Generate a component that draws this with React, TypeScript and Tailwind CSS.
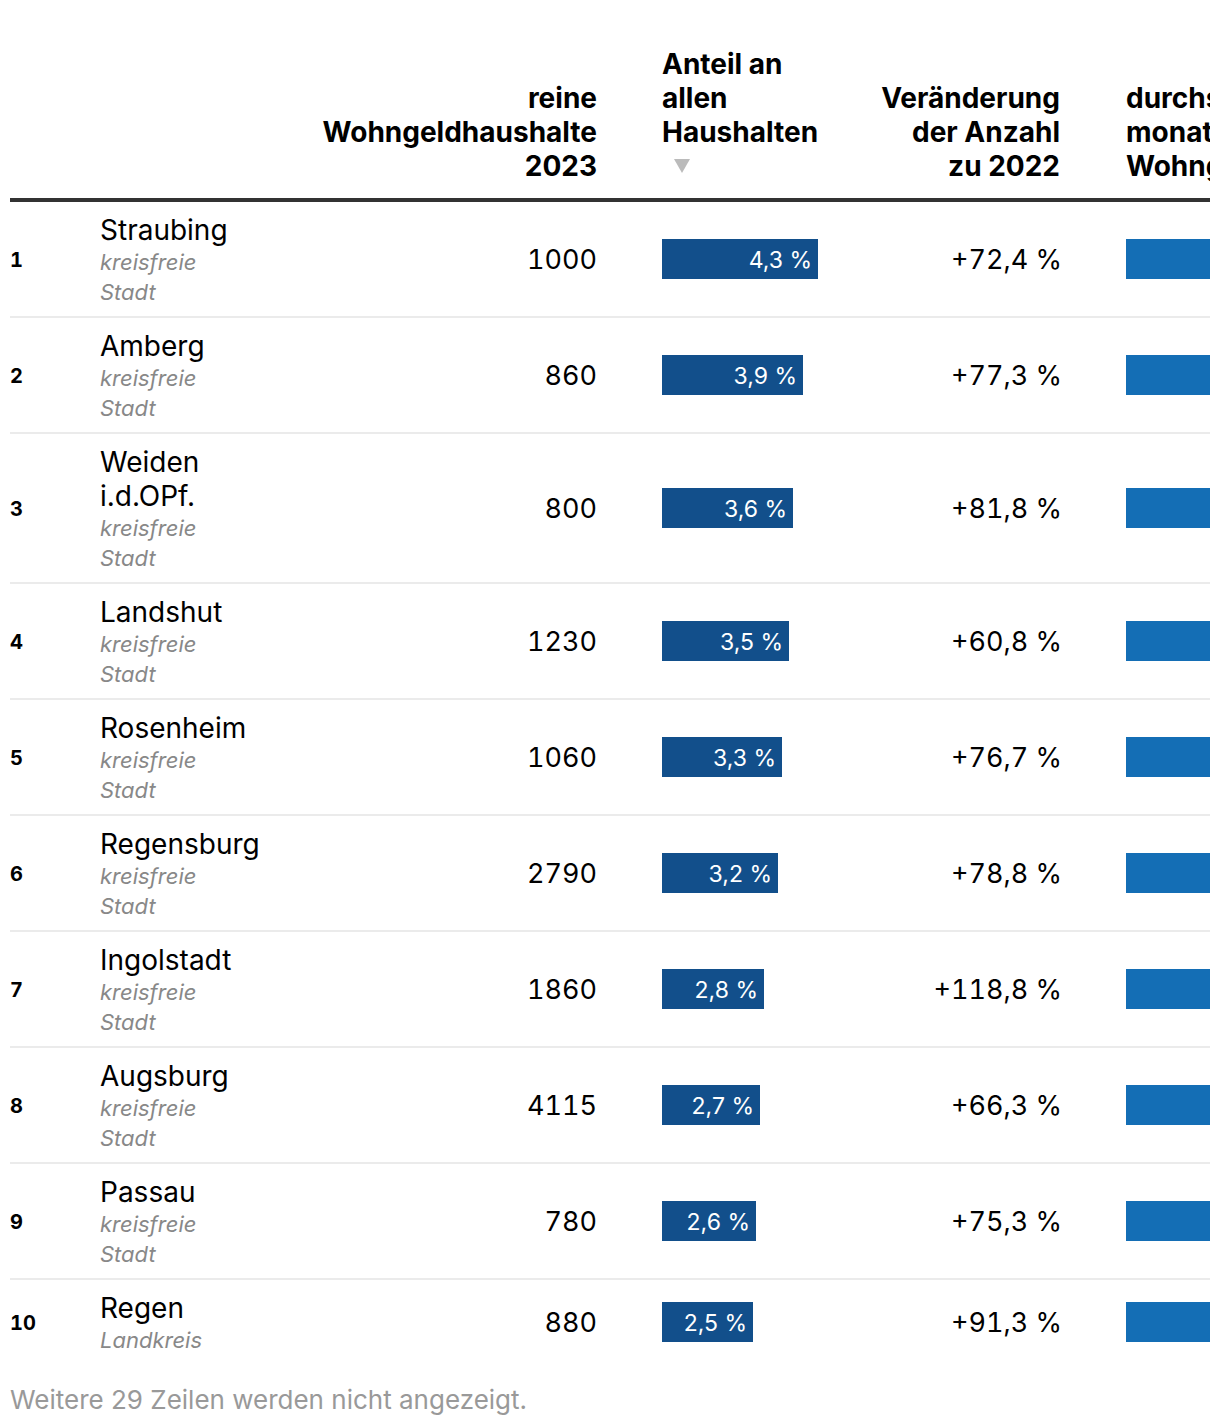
import React from "react";

type Row = {
  rank: number;
  name: string;
  type: string;
  count: string;
  share: number;
  change: string;
};

const rows: Row[] = [
  { rank: 1, name: "Straubing", type: "kreisfreie Stadt", count: "1000", share: 4.3, change: "+72,4 %" },
  { rank: 2, name: "Amberg", type: "kreisfreie Stadt", count: "860", share: 3.9, change: "+77,3 %" },
  { rank: 3, name: "Weiden i.d.OPf.", type: "kreisfreie Stadt", count: "800", share: 3.6, change: "+81,8 %" },
  { rank: 4, name: "Landshut", type: "kreisfreie Stadt", count: "1230", share: 3.5, change: "+60,8 %" },
  { rank: 5, name: "Rosenheim", type: "kreisfreie Stadt", count: "1060", share: 3.3, change: "+76,7 %" },
  { rank: 6, name: "Regensburg", type: "kreisfreie Stadt", count: "2790", share: 3.2, change: "+78,8 %" },
  { rank: 7, name: "Ingolstadt", type: "kreisfreie Stadt", count: "1860", share: 2.8, change: "+118,8 %" },
  { rank: 8, name: "Augsburg", type: "kreisfreie Stadt", count: "4115", share: 2.7, change: "+66,3 %" },
  { rank: 9, name: "Passau", type: "kreisfreie Stadt", count: "780", share: 2.6, change: "+75,3 %" },
  { rank: 10, name: "Regen", type: "Landkreis", count: "880", share: 2.5, change: "+91,3 %" },
];

export default function App() {
  return (
    <div
      className="w-[1220px] bg-white px-[10px] pt-[47px] pb-[10px] text-black"
      style={{ fontFamily: "Inter, 'Noto Sans', sans-serif" }}
    >
      <div className="overflow-hidden">
        <table className="table-fixed border-collapse w-[1400px]">
          <colgroup>
            <col className="w-[90px]" />
            <col className="w-[190px]" />
            <col className="w-[340px]" />
            <col className="w-[202px]" />
            <col className="w-[261px]" />
            <col className="w-[317px]" />
          </colgroup>
          <thead>
            <tr className="border-b-[4px] border-[#333333] text-[28px] leading-[34px] font-bold">
              <th className="pb-[15px] align-bottom"></th>
              <th className="pb-[15px] align-bottom"></th>
              <th className="pb-[15px] pr-[33px] align-bottom text-right font-bold">
                reine Wohngeldhaushalte 2023
              </th>
              <th className="pb-[15px] pl-[32px] align-bottom text-left font-bold">
                <div>Anteil an allen Haushalten</div>
                <div className="h-[34px] flex items-center pl-[12px]">
                  <svg width="16" height="14" viewBox="0 0 16 14">
                    <polygon points="0,0 16,0 8,14" fill="#bbbbbb" />
                  </svg>
                </div>
              </th>
              <th className="pb-[15px] pl-[48px] pr-[33px] align-bottom text-right font-bold">
                Veränderung der Anzahl zu 2022
              </th>
              <th className="pb-[15px] pl-[33px] align-bottom text-left font-bold">
                <div className="w-[150px]">durchschnittlicher monatlicher Wohngeldanspruch</div>
              </th>
            </tr>
          </thead>
          <tbody>
            {rows.map((r, i) => (
              <tr
                key={r.rank}
                className={i < rows.length - 1 ? "border-b-[2px] border-[#ebebeb]" : ""}
              >
                <td className="pt-[2px] align-middle text-[20px] font-bold tabular-nums">{r.rank}</td>
                <td className="pt-[11px] pb-[9px] pr-[30px] align-middle">
                  <div className="text-[28px] leading-[34px]">{r.name}</div>
                  <div className="w-[140px] text-[22px] leading-[30px] italic text-[#888888]">{r.type}</div>
                </td>
                <td className="pt-[2px] pr-[33px] align-middle text-right text-[27px] tabular-nums">{r.count}</td>
                <td className="pl-[32px] align-middle">
                  <div
                    className="h-[40px] bg-[#124f8b] flex items-center justify-end pr-[6px] pt-[2px] text-white text-[23px]"
                    style={{ width: `${Math.round((r.share / 4.3) * 156)}px` }}
                  >
                    {r.share.toFixed(1).replace(".", ",")} %
                  </div>
                </td>
                <td className="pt-[2px] pl-[48px] pr-[31px] align-middle text-right text-[27px] tabular-nums">
                  {r.change}
                </td>
                <td className="pl-[33px] align-middle">
                  <div className="h-[40px] w-[180px] bg-[#146eb5]"></div>
                </td>
              </tr>
            ))}
          </tbody>
        </table>
      </div>
      <div className="mt-[19px] text-[26px] leading-[34px] text-[#999999]">
        Weitere 29 Zeilen werden nicht angezeigt.
      </div>
    </div>
  );
}
